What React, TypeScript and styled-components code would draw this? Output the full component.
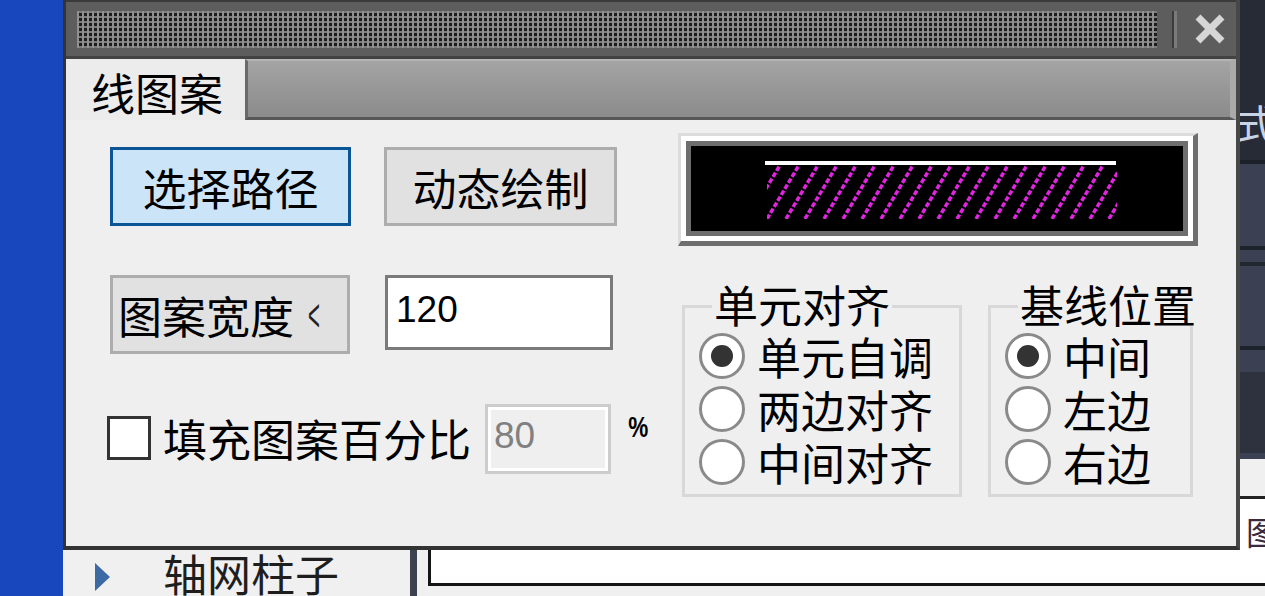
import React from "react";
import styled, { createGlobalStyle } from "styled-components";

const CJK = `"Noto Sans CJK SC", "Noto Sans", sans-serif`;
const LATIN = `"Liberation Sans", Arial, sans-serif`;

const HATCH_LINES = Array.from({ length: 22 }, (_, i) => 76 + (i - 2) * 19);

const SIDE_BANDS: { h: number; bg: string }[] = [
  { h: 4, bg: "#1c2029" },
  { h: 82, bg: "#3b4153" },
  { h: 4, bg: "#1e222b" },
  { h: 12, bg: "#3b4153" },
  { h: 4, bg: "#22262f" },
  { h: 80, bg: "#3b4153" },
  { h: 4, bg: "#1e222b" },
  { h: 22, bg: "#3b4153" },
  { h: 81, bg: "#2d323e" },
  { h: 6, bg: "#3b4153" },
  { h: 37, bg: "#f0f0f0" },
  { h: 3, bg: "#222222" },
];

export default function App() {
  return (
    <>
      <GlobalStyle />
      <Screen>
        <BlueStrip />
        <Workspace>
          <TopArea>
            <Hidden />
            <SidePanel>
              <Band $h={160} $bg="#262b36">
                <SideGlyph>式</SideGlyph>
              </Band>
              {SIDE_BANDS.map((b, i) => (
                <Band key={i} $h={b.h} $bg={b.bg} />
              ))}
              <Band $h={51} $bg="#ffffff">
                <SideGlyph $dark>图</SideGlyph>
              </Band>
            </SidePanel>
          </TopArea>
          <BottomBar>
            <TreePanel>
              <Arrow />
              <TreeLabel>轴网柱子</TreeLabel>
            </TreePanel>
            <Splitter />
            <ContentArea>
              <OutputBox />
            </ContentArea>
          </BottomBar>
        </Workspace>

        <Dialog>
          <TitleBar>
            <Grip />
            <Separator />
            <CloseButton>
              <svg width="30" height="30" viewBox="0 0 30 30">
                <path d="M3 3 L27 27 M27 3 L3 27" stroke="#d6d6d6" strokeWidth="7" />
              </svg>
            </CloseButton>
          </TitleBar>

          <TabStrip>
            <Tab>线图案</Tab>
            <TabFill />
          </TabStrip>

          <Body>
            <LeftColumn>
              <Row>
                <Button $w={241} $focused>
                  选择路径
                </Button>
                <Button $w={233}>动态绘制</Button>
              </Row>
              <Row $top={49} $gap={35}>
                <Button $w={240} $align="start">
                  图案宽度<Chevron>&lt;</Chevron>
                </Button>
                <TextBox $w={228} $h={75} readOnly value="120" />
              </Row>
              <Row $top={50} $gap={0}>
                <CheckBox />
                <CheckLabel>填充图案百分比</CheckLabel>
                <TextBox $w={126} $h={70} $disabled readOnly value="80" />
                <Percent>%</Percent>
              </Row>
            </LeftColumn>

            <RightColumn>
              <Preview>
                <PreviewCanvas>
                  <svg width="492" height="85" viewBox="0 0 492 85">
                    <defs>
                      <clipPath id="hatch-clip">
                        <rect x="76" y="19" width="350" height="54" />
                      </clipPath>
                    </defs>
                    <rect x="74" y="15" width="351" height="4" fill="#ffffff" />
                    <g
                      clipPath="url(#hatch-clip)"
                      stroke="#e024e0"
                      strokeWidth="3.5"
                      strokeDasharray="5 2"
                    >
                      {HATCH_LINES.map((x) => (
                        <line key={x} x1={x} y1={73} x2={x + 32} y2={19} />
                      ))}
                    </g>
                  </svg>
                </PreviewCanvas>
              </Preview>

              <Groups>
                <GroupBox $w={280}>
                  <Legend>单元对齐</Legend>
                  <RadioList>
                    <RadioRow>
                      <Radio $checked />
                      <RadioLabel>单元自调</RadioLabel>
                    </RadioRow>
                    <RadioRow>
                      <Radio />
                      <RadioLabel>两边对齐</RadioLabel>
                    </RadioRow>
                    <RadioRow>
                      <Radio />
                      <RadioLabel>中间对齐</RadioLabel>
                    </RadioRow>
                  </RadioList>
                </GroupBox>
                <GroupBox $w={205}>
                  <Legend>基线位置</Legend>
                  <RadioList>
                    <RadioRow>
                      <Radio $checked />
                      <RadioLabel>中间</RadioLabel>
                    </RadioRow>
                    <RadioRow>
                      <Radio />
                      <RadioLabel>左边</RadioLabel>
                    </RadioRow>
                    <RadioRow>
                      <Radio />
                      <RadioLabel>右边</RadioLabel>
                    </RadioRow>
                  </RadioList>
                </GroupBox>
              </Groups>
            </RightColumn>
          </Body>
        </Dialog>
      </Screen>
    </>
  );
}

const GlobalStyle = createGlobalStyle`
  html, body {
    margin: 0;
    padding: 0;
  }
  body {
    width: 1265px;
    height: 596px;
    overflow: hidden;
    background: #1846bd;
    font-family: ${CJK};
  }
`;

const Screen = styled.div`
  position: relative;
  width: 1265px;
  height: 596px;
  overflow: hidden;
  display: grid;
  grid-template-columns: 63px 1fr;
`;

const BlueStrip = styled.div`
  background: #1846bd;
`;

const Workspace = styled.div`
  display: grid;
  grid-template-rows: 550px 46px;
  min-width: 0;
`;

const TopArea = styled.div`
  display: grid;
  grid-template-columns: 1fr 25px;
`;

const Hidden = styled.div`
  background: #2a2f3a;
`;

const SidePanel = styled.div`
  display: flex;
  flex-direction: column;
  overflow: hidden;
`;

const Band = styled.div<{ $h: number; $bg: string }>`
  flex: 0 0 ${(p) => p.$h}px;
  background: ${(p) => p.$bg};
  overflow: hidden;
`;

const SideGlyph = styled.div<{ $dark?: boolean }>`
  margin: ${(p) => (p.$dark ? "16px 0 0 6px" : "102px 0 0 -4px")};
  font-size: ${(p) => (p.$dark ? 32 : 40)}px;
  line-height: 1;
  color: ${(p) => (p.$dark ? "#3a2a40" : "#c9d3e6")};
  white-space: nowrap;
`;

const BottomBar = styled.div`
  display: grid;
  grid-template-columns: 347px 7px 1fr;
  min-width: 0;
`;

const TreePanel = styled.div`
  background: #f0f0f0;
  display: flex;
  align-items: flex-start;
  padding-left: 32px;
  overflow: hidden;
`;

const Arrow = styled.span`
  margin-top: 13px;
  width: 0;
  height: 0;
  border-left: 15px solid #3b6aa5;
  border-top: 14px solid transparent;
  border-bottom: 14px solid transparent;
`;

const TreeLabel = styled.span`
  margin-left: 53px;
  margin-top: 1px;
  font-size: 44px;
  line-height: 44px;
  color: #1e1e1e;
  white-space: nowrap;
`;

const Splitter = styled.div`
  background: #3d4250;
`;

const ContentArea = styled.div`
  background: #f0f0f0;
  padding-left: 11px;
  overflow: hidden;
`;

const OutputBox = styled.div`
  height: 33px;
  background: #ffffff;
  border: 3px solid #151515;
  border-top: none;
  border-right: none;
`;

const Dialog = styled.div`
  position: absolute;
  left: 63px;
  top: 0;
  width: 1177px;
  height: 550px;
  box-sizing: border-box;
  background: #efefef;
  border-left: 3px solid #333333;
  border-right: 4px solid #474747;
  border-bottom: 4px solid #333333;
  display: flex;
  flex-direction: column;
  font-family: ${CJK};
  color: #000;
`;

const TitleBar = styled.div`
  flex: 0 0 54px;
  display: flex;
  align-items: center;
  padding-left: 11px;
  background: #5d5d5d;
  border-top: 2px solid #3a3a3a;
  border-bottom: 3px solid #424242;
`;

const Grip = styled.div`
  flex: 1;
  height: 37px;
  background:
    linear-gradient(90deg, #909090 0 2px, transparent 2px) 0 0 / 5px 5px,
    linear-gradient(#7c7c7c 0 2px, transparent 2px) 0 0 / 5px 5px,
    #1d1d1d;
`;

const Separator = styled.div`
  margin-left: 15px;
  width: 2px;
  height: 37px;
  background: #3c3c3c;
  border-right: 3px solid #7a7a7a;
`;

const CloseButton = styled.div`
  margin-left: 18px;
  margin-right: 11px;
  width: 30px;
  height: 30px;
  display: flex;
`;

const TabStrip = styled.div`
  flex: 0 0 61px;
  display: flex;
`;

const Tab = styled.div`
  width: 179px;
  background: #ececec;
  padding-left: 25px;
  padding-top: 4px;
  box-sizing: border-box;
  display: flex;
  align-items: center;
  font-size: 44px;
  line-height: 1;
  white-space: nowrap;
`;

const TabFill = styled.div`
  flex: 1;
  border-left: 3px solid #6a6a6a;
  border-top: 2px solid #b4b4b4;
  border-bottom: 3px solid #575757;
  border-right: 6px solid #aaaaaa;
  background: linear-gradient(#a4a4a4, #8b8b8b);
`;

const Body = styled.div`
  flex: 1;
  display: flex;
  padding: 13px 0 0 44px;
`;

const LeftColumn = styled.div`
  width: 568px;
  padding-top: 14px;
  display: flex;
  flex-direction: column;
`;

const Row = styled.div<{ $top?: number; $gap?: number }>`
  display: flex;
  align-items: flex-start;
  margin-top: ${(p) => p.$top ?? 0}px;
  gap: ${(p) => p.$gap ?? 33}px;
`;

const Button = styled.div<{ $w: number; $focused?: boolean; $align?: "start" }>`
  width: ${(p) => p.$w}px;
  height: 79px;
  box-sizing: border-box;
  display: flex;
  align-items: center;
  justify-content: ${(p) => (p.$align === "start" ? "flex-start" : "center")};
  padding-left: ${(p) => (p.$align === "start" ? 5 : 0)}px;
  background: ${(p) => (p.$focused ? "#cce4f7" : "#e1e1e1")};
  border: 3px solid ${(p) => (p.$focused ? "#0a5596" : "#adadad")};
  font-size: 44px;
  line-height: 1;
  white-space: nowrap;
`;

const Chevron = styled.span`
  display: inline-block;
  margin-left: 10px;
  font-family: ${LATIN};
  font-size: 34px;
  line-height: 1;
  transform: scale(0.6, 1.35);
  color: #222;
`;

const TextBox = styled.input<{ $w: number; $h: number; $disabled?: boolean }>`
  width: ${(p) => p.$w}px;
  height: ${(p) => p.$h}px;
  box-sizing: border-box;
  margin: 0;
  padding: 0 0 6px ${(p) => (p.$disabled ? 6 : 8)}px;
  border: 3px solid ${(p) => (p.$disabled ? "#cccccc" : "#7a7a7a")};
  box-shadow: ${(p) => (p.$disabled ? "inset 0 0 0 3px #ffffff" : "none")};
  background: ${(p) => (p.$disabled ? "#efefef" : "#ffffff")};
  color: ${(p) => (p.$disabled ? "#808080" : "#000000")};
  font-family: ${LATIN};
  font-size: 37px;
  outline: none;
`;

const CheckBox = styled.span`
  margin: 12px 0 0 -3px;
  width: 44px;
  height: 44px;
  box-sizing: border-box;
  background: #ffffff;
  border: 3px solid #333333;
`;

const CheckLabel = styled.span`
  margin: 12px 14px 0 12px;
  font-size: 44px;
  line-height: 44px;
  white-space: nowrap;
`;

const Percent = styled.span`
  margin: 6px 0 0 14px;
  font-family: ${LATIN};
  font-size: 30px;
  font-weight: bold;
  line-height: 34px;
  transform: scaleX(0.75);
`;

const RightColumn = styled.div`
  width: 520px;
  display: flex;
  flex-direction: column;
`;

const Preview = styled.div`
  height: 113px;
  box-sizing: border-box;
  padding: 5px;
  background: #ffffff;
  border-style: solid;
  border-width: 3px 5px 5px 3px;
  border-color: #dcdcdc #6e6e6e #6e6e6e #dcdcdc;
`;

const PreviewCanvas = styled.div`
  height: 100%;
  box-sizing: border-box;
  border: 5px solid #6e6e6e;
  background: #000000;
  display: flex;
  overflow: hidden;
`;

const Groups = styled.div`
  margin-top: 59px;
  padding-left: 4px;
  display: flex;
  gap: 26px;
`;

const GroupBox = styled.div<{ $w: number }>`
  position: relative;
  width: ${(p) => p.$w}px;
  height: 192px;
  box-sizing: border-box;
  border: 3px solid #d8d8d8;
  padding: 24px 0 0 14px;
`;

const Legend = styled.span`
  position: absolute;
  top: -26px;
  left: 27px;
  padding: 0 2px;
  background: #efefef;
  font-size: 44px;
  line-height: 44px;
  white-space: nowrap;
`;

const RadioList = styled.div`
  display: flex;
  flex-direction: column;
  gap: 6px;
`;

const RadioRow = styled.div`
  display: flex;
  align-items: center;
  height: 47px;
`;

const Radio = styled.span<{ $checked?: boolean }>`
  flex: 0 0 46px;
  height: 46px;
  box-sizing: border-box;
  border-radius: 50%;
  border: 3px solid #8a8a8a;
  background: #ffffff;
  display: flex;
  align-items: center;
  justify-content: center;
  &::after {
    content: "";
    width: 22px;
    height: 22px;
    border-radius: 50%;
    background: ${(p) => (p.$checked ? "#333333" : "transparent")};
  }
`;

const RadioLabel = styled.span`
  margin-left: 12px;
  font-size: 44px;
  line-height: 44px;
  white-space: nowrap;
`;
